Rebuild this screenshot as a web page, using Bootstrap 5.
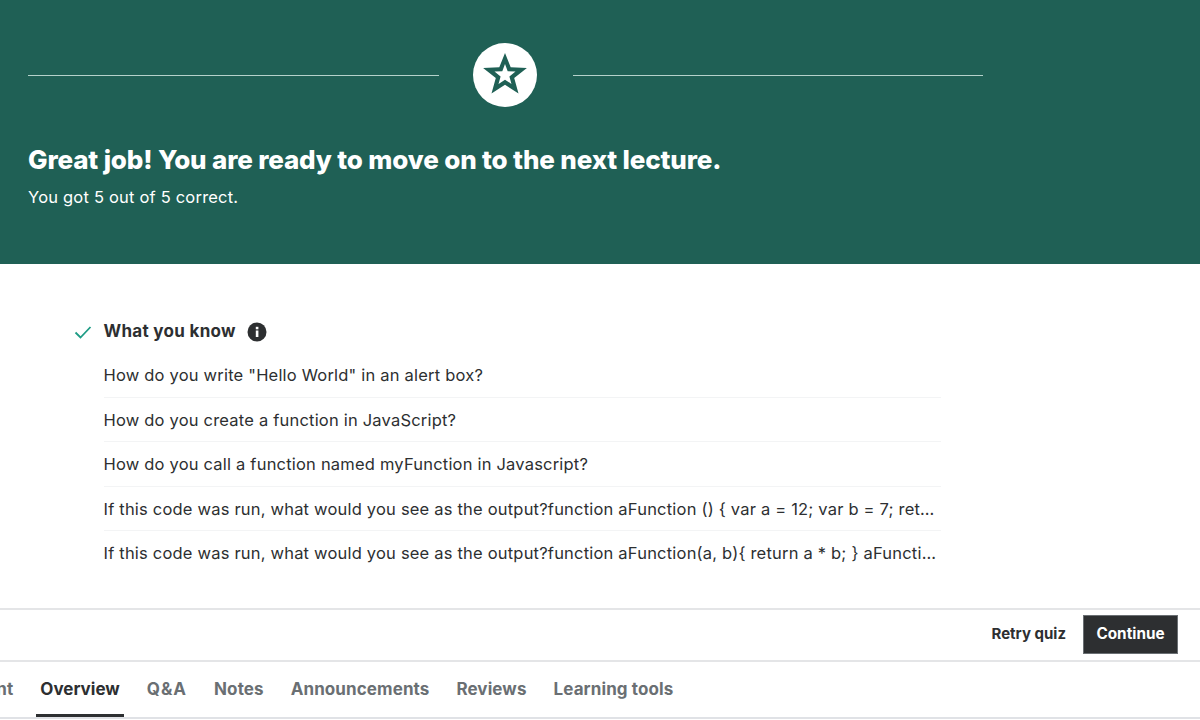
<!doctype html>
<html lang="en"><head><meta charset="utf-8"><title>Quiz result</title>
<link href="https://cdn.jsdelivr.net/npm/bootstrap@5.3.0/dist/css/bootstrap.min.css" rel="stylesheet">
<style>
html,body{height:720px;overflow:hidden}
body{font-family:Inter,"Liberation Sans",sans-serif;color:#2d2f31;background:#fff}
.hero{height:264px;background:#1f6055;color:#fff;padding:43px 0 0 28px}
.hero-line{height:1px;background:#b5d2cb}
.hero-line-a{width:411px}
.hero-line-b{width:410px}
.hero-badge{width:64px;height:64px;background:#fff;border-radius:50%;margin:0 36px 0 34px}
.hero-title{font-size:26px;font-weight:800;line-height:32px;margin:37px 0 0;letter-spacing:-.15px}
.hero-sub{font-size:16.5px;line-height:24px;margin:9px 0 0;letter-spacing:.2px}
.know{height:344px;padding:56px 0 0 74px}
.know-head{height:24px}
.know-title{font-size:17px;font-weight:700;margin:0 11px 0 11.5px;letter-spacing:.3px}
.know-list{width:837.5px;margin:9px 0 0 29.5px}
.know-item{height:44.5px;line-height:45px;font-size:16.5px;border-bottom:1px solid #f3f4f5;letter-spacing:.2px;white-space:nowrap;overflow:hidden;text-overflow:ellipsis}
.know-item:last-child{border-bottom:0}
.action-bar{height:54px;border-top:2px solid #e4e5e7;border-bottom:2px solid #e4e5e7;padding:5px 22px 0 0}
.retry{font-size:15px;font-weight:700;line-height:38px;color:#2d2f31;margin-right:17px}
.cont{width:95px;height:39px;border-radius:0;background:#2d2f31;color:#fff;font-size:15.3px;font-weight:700;border:1px solid #6a6f73;padding:0}
.cont:hover{background:#2d2f31;color:#fff}
.tabs{height:57px;border-bottom:2px solid #e0e2e6;margin-left:-54px;font-size:17px;font-weight:700;color:#6a6f73;gap:27px;letter-spacing:.1px}
.tab-item{display:block;height:55px;line-height:55px;white-space:nowrap}
.tab-active{color:#2d2f31;border-bottom:3px solid #2d2f31;margin:0 -4px;padding:0 4px;box-sizing:content-box;height:52px;letter-spacing:0}
.tab-wide{letter-spacing:1px}
</style></head><body>
<section class="hero">
<div class="d-flex align-items-center">
<div class="hero-line hero-line-a"></div>
<div class="hero-badge d-flex align-items-center justify-content-center">
<svg width="44" height="44" viewBox="0 0 44 44" aria-hidden="true"><path fill-rule="evenodd" fill="#1f6055" d="M22 0L27.700 14.150 43.900 14.900 31.200 25 35.500 40.600 22 31.700 8.500 40.600 12.800 25 .1 14.900 16.300 14.150zM22 11L19.300 18.250 11.500 18.600 17.600 23.400 15.550 30.900 22 26.640 28.450 30.900 26.400 23.400 32.500 18.600 24.700 18.250z"/></svg>
</div>
<div class="hero-line hero-line-b"></div>
</div>
<h1 class="hero-title">Great job! You are ready to move on to the next lecture.</h1>
<p class="hero-sub">You got 5 out of 5 correct.</p>
</section>
<section class="know">
<div class="know-head d-flex align-items-center">
<svg width="18" height="18" viewBox="0 0 18 18" aria-hidden="true"><path d="M1.500 9.500l5 5L16.500 4" fill="none" stroke="#1e9c85" stroke-width="1.800"/></svg>
<span class="know-title">What you know</span>
<svg width="20" height="20" viewBox="0 0 20 20" aria-hidden="true"><circle cx="10" cy="10" r="9.500" fill="#2d2f31"/><rect x="8.800" y="8.500" width="2.600" height="6.500" fill="#fff"/><rect x="8.800" y="4.800" width="2.600" height="2.500" fill="#fff"/></svg>
</div>
<div class="know-list">
<div class="know-item">How do you write "Hello World" in an alert box?</div>
<div class="know-item">How do you create a function in JavaScript?</div>
<div class="know-item">How do you call a function named myFunction in Javascript?</div>
<div class="know-item">If this code was run, what would you see as the output?function aFunction () { var a = 12; var b = 7; return a + b; }</div>
<div class="know-item">If this code was run, what would you see as the output?function aFunction(a, b){ return a * b; } aFunction(3, 4);</div>
</div>
</section>
<div class="action-bar d-flex justify-content-end align-items-start">
<a class="retry text-decoration-none" href="#">Retry quiz</a>
<button class="btn cont" type="button">Continue</button>
</div>
<nav class="tabs d-flex">
<span class="tab-item">Content</span>
<span class="tab-item tab-active">Overview</span>
<span class="tab-item tab-wide">Q&amp;A</span>
<span class="tab-item">Notes</span>
<span class="tab-item">Announcements</span>
<span class="tab-item">Reviews</span>
<span class="tab-item">Learning tools</span>
</nav>
</body></html>
